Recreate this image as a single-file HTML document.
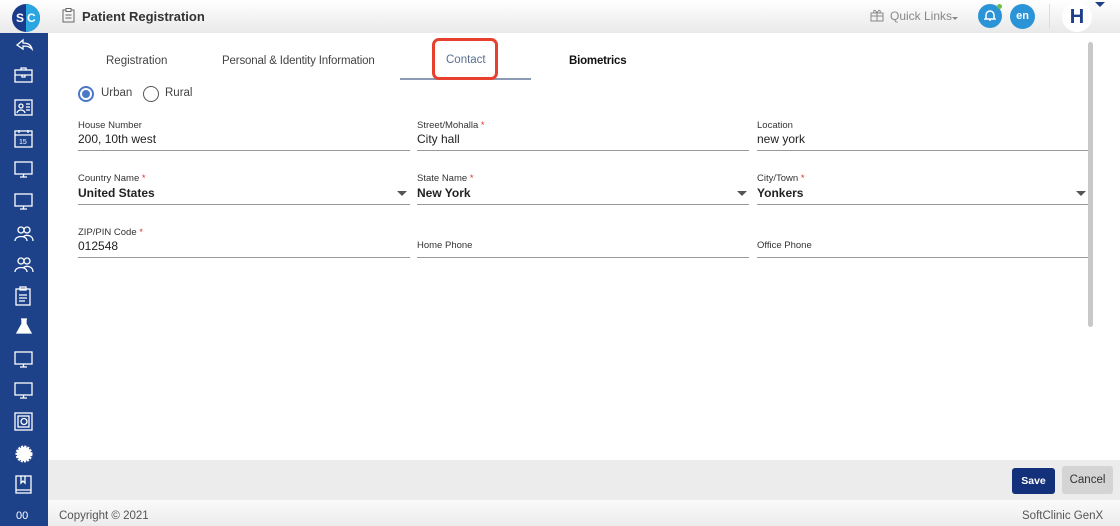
<!DOCTYPE html>
<html><head><meta charset="utf-8"><style>
*{margin:0;padding:0;box-sizing:border-box}
body{width:1120px;height:526px;overflow:hidden;font-family:"Liberation Sans",sans-serif;background:#fff;position:relative;color:#222}
.hdr{position:absolute;left:0;top:0;width:1120px;height:33px;background:linear-gradient(#fff,#e9e9e9);}
.side{position:absolute;left:0;top:33px;width:48px;height:493px;background:#1d428a}
.abs{position:absolute}
.lbl{position:absolute;font-size:9.5px;color:#333}
.val{position:absolute;font-size:12px;color:#222}
.ul{position:absolute;height:1px;background:#999;width:332px}
.arrow{position:absolute;width:0;height:0;border-left:5px solid transparent;border-right:5px solid transparent;border-top:5px solid #555}
</style></head><body>
<div class="hdr"></div>
<div class="abs" style="left:12px;top:4px;width:28px;height:28px;border-radius:50%;background:#1a3a8a;overflow:hidden"><div style="position:absolute;right:0;top:0;width:14px;height:28px;background:#2aa6e0"></div><span style="position:absolute;left:4px;top:7px;color:#fff;font-weight:bold;font-size:12px">S</span><span style="position:absolute;left:15px;top:7px;color:#fff;font-weight:bold;font-size:12px">C</span></div>
<svg class="abs" style="left:62px;top:8px" width="13" height="15"><rect x="1" y="2" width="11" height="12" fill="none" stroke="#666"/><rect x="4" y="0.5" width="5" height="3" fill="#fff" stroke="#666"/><path d="M3.5 7h6M3.5 10h6" stroke="#666"/></svg>
<div class="abs" style="left:82px;top:9px;font-size:13px;font-weight:bold;color:#333">Patient Registration</div>
<svg class="abs" style="left:870px;top:8px" width="14" height="14"><rect x="1" y="5" width="12" height="8" fill="none" stroke="#888"/><path d="M1 8h12M7 5v8M7 5C5 1 3 2 4 5M7 5c2-4 4-3 3 0" fill="none" stroke="#888"/></svg>
<div class="abs" style="left:890px;top:9px;font-size:12px;color:#888">Quick Links</div>
<div class="arrow" style="left:952px;top:17px;border-width:3px 3px 0;border-top-color:#888"></div>
<div class="abs" style="left:978px;top:4px;width:24px;height:24px;border-radius:50%;background:#2b94d6"></div>
<svg class="abs" style="left:984px;top:9px" width="12" height="13"><path d="M2 9V6a4 4 0 0 1 8 0v3l1 1H1z M5 11h2" fill="none" stroke="#fff" stroke-width="1.5"/></svg>
<div class="abs" style="left:997px;top:4px;width:5px;height:5px;border-radius:50%;background:#6cc04a"></div>
<div class="abs" style="left:1010px;top:4px;width:25px;height:25px;border-radius:50%;background:#2b94d6;color:#fff;font-size:11px;font-weight:bold;text-align:center;line-height:25px">en</div>
<div class="abs" style="left:1049px;top:4px;width:1px;height:24px;background:#ddd"></div>
<div class="abs" style="left:1062px;top:2px;width:30px;height:30px;border-radius:50%;background:#fff;color:#1d3f8a;font-weight:bold;font-size:20px;text-align:center;line-height:30px">H</div>
<div class="arrow" style="left:1095px;top:2px;border-top-color:#1d3f8a"></div>

<div class="side"></div>
<svg class="abs" style="left:0;top:33px" width="48" height="493" fill="none" stroke="#fff" stroke-width="1.3">
<path d="M17 12l6-5v3c5 0 8 2 9 6-2-2-4-3-9-3v3z"/>
<g transform="translate(15,34)"><rect x="0" y="3" width="17" height="12"/><path d="M6 3V1h5v2M0 8h17M7 8v2h3V8"/></g>
<g transform="translate(15,66)"><rect x="0" y="1" width="17" height="15"/><circle cx="6" cy="7" r="2"/><path d="M2 14c1-4 7-4 8 0M11 5h4M11 8h4M11 11h4"/></g>
<g transform="translate(15,97)"><rect x="0" y="1" width="17" height="16"/><path d="M0 5h17M4 0v3M13 0v3"/><text x="4" y="14" font-size="7" fill="#fff" stroke="none" font-family="Liberation Sans">15</text></g>
<g transform="translate(15,128)"><rect x="0" y="1" width="17" height="12"/><path d="M8.5 13v3M5 16h7"/></g>
<g transform="translate(15,160)"><rect x="0" y="1" width="17" height="12"/><path d="M8.5 13v3M5 16h7"/></g>
<g transform="translate(14,192)"><circle cx="7" cy="5" r="3"/><circle cx="13" cy="5" r="3"/><path d="M1 16c0-6 12-6 12 0M9 12c3-3 10-2 10 4"/></g>
<g transform="translate(14,223)"><circle cx="7" cy="5" r="3"/><circle cx="13" cy="5" r="3"/><path d="M1 16c0-6 12-6 12 0M9 12c3-3 10-2 10 4"/></g>
<g transform="translate(16,254)"><rect x="0" y="2" width="14" height="16"/><rect x="4" y="0" width="6" height="3"/><path d="M3 8h8M3 11h8M3 14h6"/></g>
<path d="M21 286h6M22 286v5l-5 9h14l-5-9v-5" fill="#fff"/>
<g transform="translate(15,318)"><rect x="0" y="1" width="17" height="12"/><path d="M8.5 13v3M5 16h7"/></g>
<g transform="translate(15,349)"><rect x="0" y="1" width="17" height="12"/><path d="M8.5 13v3M5 16h7"/></g>
<g transform="translate(15,380)"><rect x="0" y="0" width="17" height="17"/><rect x="3" y="3" width="11" height="11"/><circle cx="9" cy="8.5" r="3"/></g>
<circle cx="24" cy="421" r="7" fill="#fff" stroke-dasharray="2 1" stroke-width="3"/>
<g transform="translate(16,443)"><rect x="0" y="0" width="15" height="17"/><path d="M0 14h15M5 0v7l2-2 2 2V0"/></g>
<text x="16" y="486" font-size="11" fill="#fff" stroke="none" font-family="Liberation Sans">00</text>
</svg>

<div class="abs" style="left:106px;top:55px;font-size:11.5px;color:#444">Registration</div>
<div class="abs" style="left:222px;top:55px;font-size:11.5px;color:#444;letter-spacing:-0.15px">Personal &amp; Identity Information</div>
<div class="abs" style="left:400px;top:78px;width:131px;height:2px;background:#8a9bb3"></div>
<div class="abs" style="left:432px;top:38px;width:66px;height:42px;border:3px solid #e8402f;border-radius:7px;background:#fff"></div>
<div class="abs" style="left:446px;top:54px;font-size:11.5px;color:#5a6f8e">Contact</div>
<div class="abs" style="left:569px;top:55px;font-size:11.5px;color:#111;font-weight:bold;letter-spacing:-0.2px">Biometrics</div>

<div class="abs" style="left:78px;top:86px;width:16px;height:16px;border-radius:50%;border:2px solid #4a78c8"></div>
<div class="abs" style="left:82px;top:90px;width:8px;height:8px;border-radius:50%;background:#4a78c8"></div>
<div class="abs" style="left:101px;top:87px;font-size:11.5px;color:#444">Urban</div>
<div class="abs" style="left:143px;top:86px;width:16px;height:16px;border-radius:50%;border:1.5px solid #555"></div>
<div class="abs" style="left:165px;top:87px;font-size:11.5px;color:#444">Rural</div>

<div class="lbl" style="left:78px;top:120px">House Number</div>
<div class="val" style="left:78px;top:132px">200, 10th west</div>
<div class="ul" style="left:78px;top:150px"></div>
<div class="lbl" style="left:417px;top:120px">Street/Mohalla <span style="color:#d33">*</span></div>
<div class="val" style="left:417px;top:132px">City hall</div>
<div class="ul" style="left:417px;top:150px"></div>
<div class="lbl" style="left:757px;top:120px">Location</div>
<div class="val" style="left:757px;top:132px">new york</div>
<div class="ul" style="left:757px;top:150px"></div>
<div class="lbl" style="left:78px;top:173px">Country Name <span style="color:#d33">*</span></div>
<div class="val" style="left:78px;top:186px;font-weight:bold">United States</div>
<div class="arrow" style="left:397px;top:191px"></div>
<div class="ul" style="left:78px;top:204px"></div>
<div class="lbl" style="left:417px;top:173px">State Name <span style="color:#d33">*</span></div>
<div class="val" style="left:417px;top:186px;font-weight:bold">New York</div>
<div class="arrow" style="left:737px;top:191px"></div>
<div class="ul" style="left:417px;top:204px"></div>
<div class="lbl" style="left:757px;top:173px">City/Town <span style="color:#d33">*</span></div>
<div class="val" style="left:757px;top:186px;font-weight:bold">Yonkers</div>
<div class="arrow" style="left:1076px;top:191px"></div>
<div class="ul" style="left:757px;top:204px"></div>
<div class="lbl" style="left:78px;top:227px">ZIP/PIN Code <span style="color:#d33">*</span></div>
<div class="val" style="left:78px;top:239px">012548</div>
<div class="ul" style="left:78px;top:257px"></div>
<div class="lbl" style="left:417px;top:240px">Home Phone</div>
<div class="ul" style="left:417px;top:257px"></div>
<div class="lbl" style="left:757px;top:240px">Office Phone</div>
<div class="ul" style="left:757px;top:257px"></div>

<div class="abs" style="left:1088px;top:42px;width:5px;height:285px;border-radius:3px;background:#c8c8c8"></div>

<div class="abs" style="left:48px;top:460px;width:1072px;height:40px;background:#ececec"></div>
<div class="abs" style="left:1012px;top:468px;width:43px;height:26px;border-radius:3px;background:#13307a;color:#fff;font-size:10.5px;font-weight:bold;text-align:center;line-height:26px">Save</div>
<div class="abs" style="left:1062px;top:466px;width:51px;height:28px;border-radius:3px;background:#d4d4d4;color:#333;font-size:11.5px;text-align:center;line-height:28px">Cancel</div>
<div class="abs" style="left:48px;top:500px;width:1072px;height:26px;background:linear-gradient(#fafafa,#ececec)"></div>
<div class="abs" style="left:59px;top:510px;font-size:11.5px;color:#555">Copyright © 2021</div>
<div class="abs" style="left:1022px;top:510px;font-size:11.5px;color:#555">SoftClinic GenX</div>
</body></html>
